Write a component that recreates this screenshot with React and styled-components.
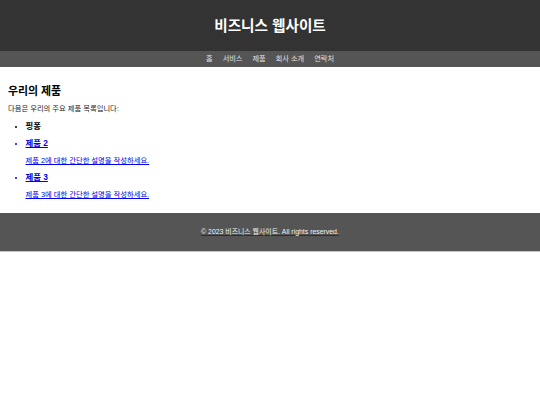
import React from "react";
import styled, { createGlobalStyle } from "styled-components";

const GlobalStyle = createGlobalStyle`
  body {
    margin: 0;
    background: #ffffff;
    font-family: "Liberation Sans", "Noto Sans CJK KR", Arial, sans-serif;
  }
`;

const Header = styled.header`
  background: #333333;
  color: #ffffff;
  height: 51px;
  display: flex;
  align-items: center;
  justify-content: center;
`;

const Title = styled.h1`
  margin: 0;
  font-size: 14.6px;
  line-height: 16px;
  font-weight: bold;
`;

const Nav = styled.nav`
  background: #555555;
  height: 16px;
  display: flex;
  align-items: center;
  justify-content: center;
  gap: 10px;
`;

const NavLink = styled.span`
  color: #e0e0e0;
  font-size: 7.2px;
  line-height: 8px;
`;

const Main = styled.main`
  padding: 8px 8px 14px;
`;

const SectionTitle = styled.h2`
  margin: 10px 0 8px;
  font-size: 10.9px;
  line-height: 12px;
  font-weight: bold;
  color: #000000;
`;

const Intro = styled.p`
  margin: 0;
  font-size: 7.3px;
  line-height: 8px;
  color: #222222;
`;

const ProductList = styled.ul`
  margin: 8.5px 0 0;
  padding-left: 17.5px;
  font-size: 6.75px;
`;

const Product = styled.li`
  color: ${(props) => (props.$link ? "#0000ee" : "#000000")};
  margin-bottom: 8.5px;
  &:last-child {
    margin-bottom: 0;
  }
`;

const ProductName = styled.h3`
  margin: 0;
  font-size: 8.4px;
  line-height: 9px;
  font-weight: bold;
  text-decoration: ${(props) => (props.$link ? "underline" : "none")};
`;

const ProductDesc = styled.p`
  margin: 8.5px 0 0;
  font-size: 7.3px;
  line-height: 8px;
  color: #0000ee;
  text-decoration: underline;
`;

const Footer = styled.footer`
  background: #555555;
  height: 38px;
  display: flex;
  align-items: center;
  justify-content: center;
  border-bottom: 1px solid #c4c4c4;
`;

const FooterText = styled.p`
  margin: 0;
  color: #f0f0f0;
  font-size: 6.9px;
  line-height: 8px;
  text-decoration: underline;
  text-decoration-color: #22228a;
`;

const navItems = ["홈", "서비스", "제품", "회사 소개", "연락처"];

const products = [
  { name: "핑퐁" },
  { name: "제품 2", desc: "제품 2에 대한 간단한 설명을 작성하세요.", link: true },
  { name: "제품 3", desc: "제품 3에 대한 간단한 설명을 작성하세요.", link: true },
];

export default function App() {
  return (
    <>
      <GlobalStyle />
      <Header>
        <Title>비즈니스 웹사이트</Title>
      </Header>
      <Nav>
        {navItems.map((item) => (
          <NavLink key={item}>{item}</NavLink>
        ))}
      </Nav>
      <Main>
        <SectionTitle>우리의 제품</SectionTitle>
        <Intro>다음은 우리의 주요 제품 목록입니다:</Intro>
        <ProductList>
          {products.map((p) => (
            <Product key={p.name} $link={p.link}>
              <ProductName $link={p.link}>{p.name}</ProductName>
              {p.desc && <ProductDesc>{p.desc}</ProductDesc>}
            </Product>
          ))}
        </ProductList>
      </Main>
      <Footer>
        <FooterText>© 2023 비즈니스 웹사이트. All rights reserved.</FooterText>
      </Footer>
    </>
  );
}
